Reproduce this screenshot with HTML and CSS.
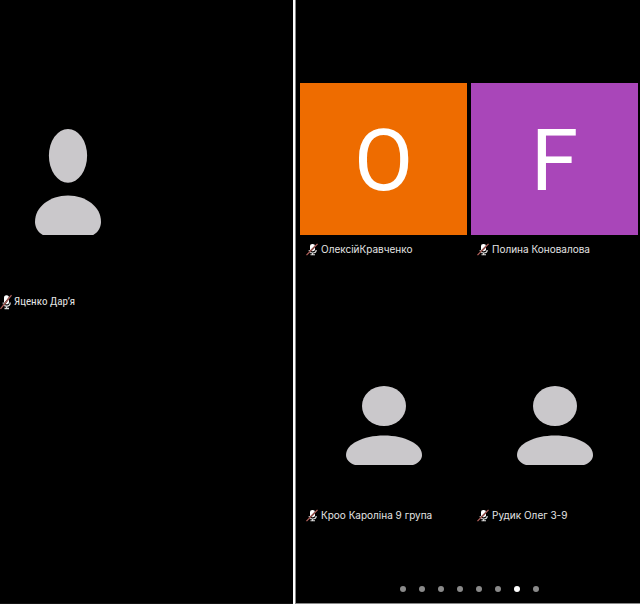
FILE: index.html
```html
<!DOCTYPE html>
<html lang="uk">
<head>
    <meta charset="UTF-8">
    <meta name="viewport" content="width=device-width, initial-scale=1.0">
    <title>Учасники зустрічі</title>
    <link rel="stylesheet" href="styles.css">
</head>
<body>
    <svg class="sprite" aria-hidden="true">
        <symbol id="mic-off" viewBox="0 0 12 14" preserveAspectRatio="none">
            <rect x="4" y="1" width="5" height="8" rx="2.3" fill="#fff"/>
            <path d="M3.2 7.500c0 4.300 7 4.300 7 0M6.600 10.500v2M4.500 12.700h4.500" fill="none" stroke="#ddd" stroke-width="1.200"/>
            <path d="M.5 13 11.500 1" stroke="#210d0d" stroke-width="1.600"/>
            <path d="M.5 13 11.500 1" stroke="#b5655f" stroke-width="1.100"/>
        </symbol>
        <symbol id="person" viewBox="0 0 76 79" preserveAspectRatio="none">
            <ellipse cx="38" cy="20" rx="22" ry="20"/>
            <path d="M0 69C0 58 17 49.500 38 49.500S76 58 76 69c0 4-3 8-9 10H9c-6-2-9-6-9-10z"/>
        </symbol>
    </svg>

    <main class="meeting">
        <section class="panel panel-left">
            <div class="participant">
                <svg class="person person-tall" aria-hidden="true"><use href="#person"/></svg>
            </div>
            <div class="name name-narrow">
                <svg class="mic" aria-hidden="true"><use href="#mic-off"/></svg>
                <span>Яценко Дар’я</span>
            </div>
        </section>

        <section class="panel panel-right">
            <div class="grid">
                <div class="tile">
                    <div class="avatar orange">O</div>
                    <div class="name">
                        <svg class="mic" aria-hidden="true"><use href="#mic-off"/></svg>
                        <span>ОлексійКравченко</span>
                    </div>
                </div>
                <div class="tile">
                    <div class="avatar purple">F</div>
                    <div class="name">
                        <svg class="mic" aria-hidden="true"><use href="#mic-off"/></svg>
                        <span>Полина Коновалова</span>
                    </div>
                </div>
                <div class="tile">
                    <div class="avatar">
                        <svg class="person" aria-hidden="true"><use href="#person"/></svg>
                    </div>
                    <div class="name">
                        <svg class="mic" aria-hidden="true"><use href="#mic-off"/></svg>
                        <span>Кроо Кароліна 9 група</span>
                    </div>
                </div>
                <div class="tile">
                    <div class="avatar">
                        <svg class="person" aria-hidden="true"><use href="#person"/></svg>
                    </div>
                    <div class="name">
                        <svg class="mic" aria-hidden="true"><use href="#mic-off"/></svg>
                        <span>Рудик Олег 3-9</span>
                    </div>
                </div>
            </div>
            <div class="dots">
                <i class="dot"></i>
                <i class="dot"></i>
                <i class="dot"></i>
                <i class="dot"></i>
                <i class="dot"></i>
                <i class="dot"></i>
                <i class="dot active"></i>
                <i class="dot"></i>
            </div>
        </section>
    </main>
</body>
</html>
```
FILE: styles.css
```css
* {
    box-sizing: border-box;
}
body {
    margin: 0;
    background: #fff;
    font-family: Inter, Roboto, sans-serif;
}
.sprite {
    display: none;
}
.meeting {
    display: grid;
    grid-template-columns: 293fr 345fr;
    gap: 2px;
    min-height: 100vh;
    padding-bottom: 2px;
}
.panel {
    background: #000;
    color: #e4e4e4;
    border-bottom: 1px solid #111;
}
.panel-left {
    padding-top: 129px;
}
.participant {
    padding-left: 35px;
}
.person {
    display: block;
    width: 76px;
    height: 79px;
    fill: #cac8cb;
}
.person-tall {
    width: 66px;
    height: 106px;
}
.panel-right {
    display: flex;
    flex-direction: column;
    justify-content: space-between;
    padding: 83px 2px 11px 4px;
    border-left: 1px solid #888;
    border-bottom-color: #888;
}
.grid {
    display: grid;
    grid-template-columns: 1fr 1fr;
    column-gap: 4px;
    row-gap: 86px;
}
.avatar {
    display: flex;
    align-items: center;
    justify-content: center;
    height: 152px;
    color: #fff;
    font-family: Roboto, sans-serif;
    font-size: 86px;
    line-height: 88px;
}
.orange,
.purple {
    padding-top: 4px;
}
.orange {
    background: #ee6c00;
}
.purple {
    background: #a946b9;
}
.name {
    display: flex;
    align-items: center;
    gap: 3px;
    height: 28px;
    padding-left: 6px;
    font-size: 10px;
    line-height: 14px;
    white-space: nowrap;
}
.name-narrow {
    gap: 2px;
    margin-top: 53px;
    padding-left: 0;
    font-family: "Liberation Sans Narrow", "Roboto Condensed", Roboto, sans-serif;
    font-size: 11px;
}
.mic {
    flex: none;
    width: 12px;
    height: 13px;
}
.name-narrow .mic {
    height: 16px;
}
.dots {
    display: flex;
    justify-content: center;
    gap: 13px;
}
.dot {
    width: 6px;
    height: 6px;
    border-radius: 50%;
    background: #8a8a8a;
}
.dot.active {
    background: #fff;
}
```
